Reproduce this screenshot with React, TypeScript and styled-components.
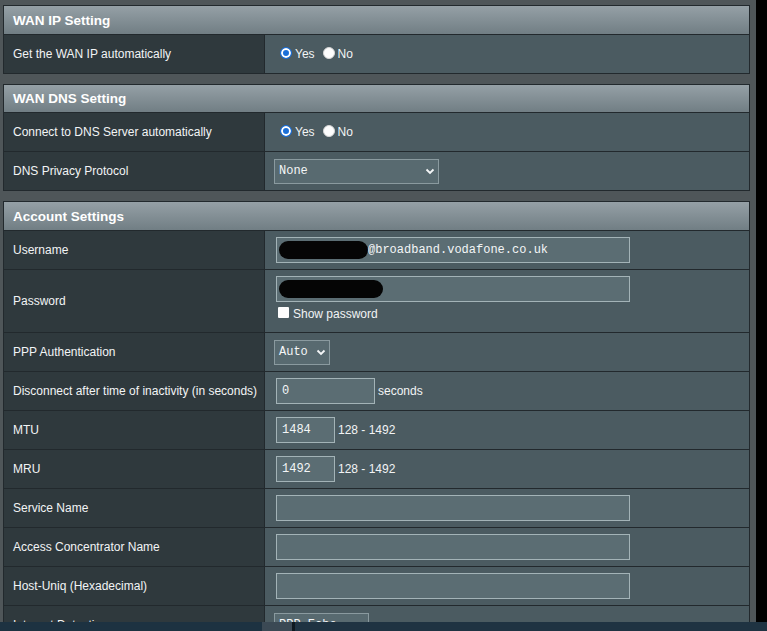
import React from 'react';
import styled, { createGlobalStyle } from 'styled-components';

const GlobalStyle = createGlobalStyle`
    html, body {
        margin: 0;
        padding: 0;
        background: #000;
        overflow: hidden;
    }
    body {
        font-family: "Liberation Sans", Arial, sans-serif;
        font-size: 12px;
        color: #f2f4f5;
    }
`;

const Screen = styled.div`
    display: flex;
    height: 631px;
    overflow: hidden;
`;

const Page = styled.div`
    width: 756px;
    box-sizing: border-box;
    padding: 5px 6px 0 3px;
    background: #4f5659;
    display: flex;
    flex-direction: column;
    gap: 10px;
`;

const BlackStrip = styled.div`
    flex: 1;
    background: #000;
`;

const Table = styled.div`
    border: 1px solid #22292d;
    display: flex;
    flex-direction: column;
`;

const Header = styled.div<{ h?: number }>`
    height: ${({ h }) => h ?? 29}px;
    box-sizing: border-box;
    padding-left: 9px;
    display: flex;
    align-items: center;
    font-size: 13.5px;
    font-weight: bold;
    color: #fff;
    background: linear-gradient(to bottom, #95a0a6 0%, #838f95 50%, #717e84 100%);
    border-bottom: 1px solid #22292d;
`;

const Row = styled.div<{ tall?: boolean }>`
    display: grid;
    grid-template-columns: 261px 1fr;
    min-height: ${({ tall }) => (tall ? '62px' : '38px')};
    & + & {
        border-top: 1px solid #22292d;
    }
`;

const Label = styled.div`
    background: #2f393d;
    border-right: 1px solid #22292d;
    box-sizing: border-box;
    padding-left: 9px;
    display: flex;
    align-items: center;
    white-space: nowrap;
`;

const Value = styled.div<{ stacked?: boolean }>`
    background: #4b5b61;
    padding-left: 11px;
    padding-top: ${({ stacked }) => (stacked ? '6px' : '0')};
    display: flex;
    flex-direction: ${({ stacked }) => (stacked ? 'column' : 'row')};
    align-items: ${({ stacked }) => (stacked ? 'flex-start' : 'center')};
    justify-content: flex-start;
    gap: 3px;
`;

const RadioGroup = styled.div`
    display: flex;
    align-items: center;
    padding-left: 4px;
    gap: 8px;
`;

const RadioOption = styled.label`
    display: flex;
    align-items: center;
    gap: 3px;
`;

const RadioDot = styled.span<{ checked?: boolean }>`
    width: 12px;
    height: 12px;
    box-sizing: border-box;
    border-radius: 50%;
    margin-top: -3px;
    background: ${({ checked }) => (checked ? '#1b6fd8' : '#fdfdfd')};
    border: 1px solid ${({ checked }) => (checked ? '#1b6fd8' : '#d6d6d6')};
    box-shadow: ${({ checked }) => (checked ? 'inset 0 0 0 2px #fff' : 'none')};
`;

const Field = styled.div<{ w: number }>`
    width: ${({ w }) => w}px;
    height: 26px;
    box-sizing: border-box;
    background: #5b6d73;
    border: 1px solid #a3b3b7;
    padding-left: 5px;
    display: flex;
    align-items: center;
    font-family: "Liberation Mono", "DejaVu Sans Mono", monospace;
    font-size: 12px;
    color: #f4f6f7;
`;

const Redact = styled.span<{ w: number }>`
    display: inline-block;
    width: ${({ w }) => w}px;
    height: 18px;
    margin-left: -3px;
    border-radius: 9px;
    background: #050505;
`;

const SelectBox = styled.div<{ w: number }>`
    width: ${({ w }) => w}px;
    height: 25px;
    margin-left: -2px;
    box-sizing: border-box;
    background: #586a70;
    border: 1px solid #8a9a9f;
    padding: 0 3px 0 4px;
    display: flex;
    align-items: center;
    justify-content: space-between;
    font-family: "Liberation Mono", "DejaVu Sans Mono", monospace;
    font-size: 12px;
    color: #f4f6f7;
`;

const CheckLine = styled.label`
    display: flex;
    align-items: center;
    gap: 4px;
    margin-top: 2px;
    padding-left: 2px;
`;

const CheckBox = styled.span`
    width: 11px;
    height: 11px;
    background: #fdfdfd;
    border-radius: 1px;
    margin-top: -3px;
`;

const Taskbar = styled.div`
    position: fixed;
    left: 0;
    right: 0;
    bottom: 0;
    height: 9px;
    display: flex;
    background: #1f3342;
`;

const TaskSegment = styled.div<{ w: number; color: string }>`
    width: ${({ w }) => w}px;
    background: ${({ color }) => color};
`;

const Chevron: React.FC = () => (
    <svg width="10" height="7" viewBox="0 0 10 7">
        <polyline points="1.5,1.5 5,5 8.5,1.5" fill="none" stroke="#f4f6f7" strokeWidth="1.8" />
    </svg>
);

const Radios: React.FC<{ yes?: boolean }> = ({ yes = true }) => (
    <RadioGroup>
        <RadioOption>
            <RadioDot checked={yes} />
            Yes
        </RadioOption>
        <RadioOption>
            <RadioDot checked={!yes} />
            No
        </RadioOption>
    </RadioGroup>
);

const App: React.FC = () => {
    return (
        <>
            <GlobalStyle />
            <Screen>
                <Page>
                    <Table>
                        <Header>WAN IP Setting</Header>
                        <Row>
                            <Label>Get the WAN IP automatically</Label>
                            <Value><Radios /></Value>
                        </Row>
                    </Table>

                    <Table>
                        <Header h={28}>WAN DNS Setting</Header>
                        <Row>
                            <Label>Connect to DNS Server automatically</Label>
                            <Value><Radios /></Value>
                        </Row>
                        <Row>
                            <Label>DNS Privacy Protocol</Label>
                            <Value>
                                <SelectBox w={165}>None<Chevron /></SelectBox>
                            </Value>
                        </Row>
                    </Table>

                    <Table>
                        <Header>Account Settings</Header>
                        <Row>
                            <Label>Username</Label>
                            <Value>
                                <Field w={354}><Redact w={89} />@broadband.vodafone.co.uk</Field>
                            </Value>
                        </Row>
                        <Row tall>
                            <Label>Password</Label>
                            <Value stacked>
                                <Field w={354}><Redact w={104} /></Field>
                                <CheckLine><CheckBox />Show password</CheckLine>
                            </Value>
                        </Row>
                        <Row>
                            <Label>PPP Authentication</Label>
                            <Value>
                                <SelectBox w={56}>Auto<Chevron /></SelectBox>
                            </Value>
                        </Row>
                        <Row>
                            <Label>Disconnect after time of inactivity (in seconds)</Label>
                            <Value>
                                <Field w={99}>0</Field>seconds
                            </Value>
                        </Row>
                        <Row>
                            <Label>MTU</Label>
                            <Value>
                                <Field w={59}>1484</Field>128 - 1492
                            </Value>
                        </Row>
                        <Row>
                            <Label>MRU</Label>
                            <Value>
                                <Field w={59}>1492</Field>128 - 1492
                            </Value>
                        </Row>
                        <Row>
                            <Label>Service Name</Label>
                            <Value><Field w={354} /></Value>
                        </Row>
                        <Row>
                            <Label>Access Concentrator Name</Label>
                            <Value><Field w={354} /></Value>
                        </Row>
                        <Row>
                            <Label>Host-Uniq (Hexadecimal)</Label>
                            <Value><Field w={354} /></Value>
                        </Row>
                        <Row>
                            <Label>Internet Detection</Label>
                            <Value>
                                <SelectBox w={95}>PPP Echo<Chevron /></SelectBox>
                            </Value>
                        </Row>
                    </Table>
                </Page>
                <BlackStrip />
            </Screen>
            <Taskbar>
                <TaskSegment w={262} color="#1d3241" />
                <TaskSegment w={30} color="#3b4954" />
                <TaskSegment w={3} color="#0e1920" />
            </Taskbar>
        </>
    );
};

export default App;
